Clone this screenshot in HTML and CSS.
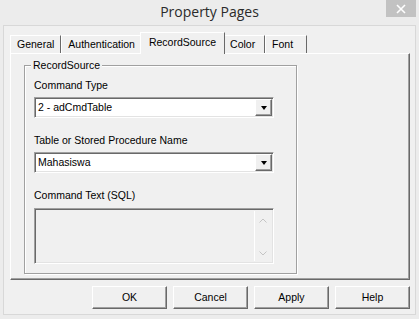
FILE: index.html
```html
<!DOCTYPE html>
<html>
<head>
<meta charset="utf-8">
<link rel="stylesheet" href="styles.css">
</head>
<body>
<div class="window">
  <div class="titlebar">
    <span class="spacer"></span>
    <div class="title">Property Pages</div>
    <div class="close">
      <svg width="10" height="10" viewBox="0 0 10 10"><path d="M1 1 L9 9 M9 1 L1 9" stroke="#fff" stroke-width="1.6" fill="none"/></svg>
    </div>
  </div>
  <div class="frame">
    <div class="tabs">
      <div class="tab">General</div>
      <div class="tab">Authentication</div>
      <div class="tab active">RecordSource</div>
      <div class="tab">Color</div>
      <div class="tab">Font</div>
    </div>
    <div class="panel">
      <div class="group">
        <div class="legend">RecordSource</div>
        <div class="label first">Command Type</div>
        <div class="combo">
          <span class="value">2 - adCmdTable</span>
          <span class="drop"><span class="arrow"></span></span>
        </div>
        <div class="label">Table or Stored Procedure Name</div>
        <div class="combo">
          <span class="value">Mahasiswa</span>
          <span class="drop"><span class="arrow"></span></span>
        </div>
        <div class="label">Command Text (SQL)</div>
        <div class="textarea">
          <div class="text"></div>
          <div class="scrollbar">
            <svg width="8" height="5" viewBox="0 0 8 5"><path d="M0.5 4.5 L4 1 L7.5 4.5" stroke="#c4c4c4" stroke-width="1" fill="none"/></svg>
            <svg width="8" height="5" viewBox="0 0 8 5"><path d="M0.5 0.5 L4 4 L7.5 0.5" stroke="#c4c4c4" stroke-width="1" fill="none"/></svg>
          </div>
        </div>
      </div>
    </div>
    <div class="buttons">
      <div class="btn">OK</div>
      <div class="btn">Cancel</div>
      <div class="btn">Apply</div>
      <div class="btn">Help</div>
    </div>
  </div>
</div>
</body>
</html>
```
FILE: styles.css
```css
html, body {
  margin: 0;
  padding: 0;
  background: #ececec;
}
.window {
  width: 419px;
  height: 319px;
  background: #ececec;
  font-family: "Liberation Sans", Arial, sans-serif;
  font-size: 10.5px;
  color: #000;
  overflow: hidden;
}
.titlebar {
  height: 25px;
  display: grid;
  grid-template-columns: 1fr auto 1fr;
}
.title {
  font-family: "Open Sans", "Noto Sans", sans-serif;
  font-size: 14px;
  line-height: 24px;
  color: #2a2a2a;
}
.close {
  justify-self: end;
  align-self: start;
  margin-right: 3px;
  width: 30px;
  height: 17px;
  background: #c2c2c2;
  display: flex;
  align-items: center;
  justify-content: center;
}
.frame {
  margin: 0 3px;
  height: 290px;
  box-sizing: border-box;
  border: 1px solid #d8d8d8;
  background: #f0f0f0;
}
.tabs {
  display: flex;
  align-items: flex-end;
  height: 21px;
  margin: 6px 0 0 6px;
}
.tab {
  height: 18px;
  box-sizing: border-box;
  min-width: 42px;
  padding: 0 6px;
  border-top: 1px solid #fff;
  border-left: 1px solid #fff;
  border-right: 1px solid #696969;
  line-height: 17px;
  white-space: nowrap;
  background: #f0f0f0;
}
.tab.active {
  height: 22px;
  margin: 0 -2px -1px -2px;
  padding: 1px 8px 0 8px;
  position: relative;
  z-index: 1;
}
.panel {
  margin-left: 6px;
  width: 400px;
  height: 227px;
  box-sizing: border-box;
  border-top: 1px solid #fff;
  border-left: 1px solid #fff;
  border-right: 1px solid #696969;
  border-bottom: 1px solid #696969;
  box-shadow: inset -1px -1px 0 #a0a0a0;
  padding-top: 11px;
  padding-left: 13px;
}
.group {
  width: 273px;
  height: 209px;
  box-sizing: border-box;
  border: 1px solid #a0a0a0;
  box-shadow: inset 1px 1px 0 #fff, 1px 1px 0 #fff;
  padding: 0 9px;
}
.legend {
  width: fit-content;
  margin: -7px 0 0 -3px;
  padding: 0 2px;
  background: #f0f0f0;
  line-height: 13px;
}
.label {
  line-height: 13px;
  margin-top: 16px;
  white-space: nowrap;
}
.label.first {
  margin-top: 7px;
}
.combo {
  margin-top: 5px;
  width: 240px;
  height: 21px;
  box-sizing: border-box;
  border-style: solid;
  border-width: 1px;
  border-color: #a0a0a0 #fff #fff #a0a0a0;
  box-shadow: inset 1px 1px 0 #696969, inset -1px -1px 0 #e3e3e3;
  background: #fff;
  display: flex;
  align-items: center;
  padding: 1px 1px 1px 3px;
}
.combo .value {
  flex: 1;
  line-height: 17px;
}
.drop {
  width: 17px;
  height: 17px;
  box-sizing: border-box;
  background: #f0f0f0;
  border-style: solid;
  border-width: 1px;
  border-color: #fff #696969 #696969 #fff;
  box-shadow: inset -1px -1px 0 #a0a0a0;
  display: flex;
  align-items: center;
  justify-content: center;
}
.arrow {
  width: 0;
  height: 0;
  border-left: 3.5px solid transparent;
  border-right: 3.5px solid transparent;
  border-top: 4px solid #000;
  margin-top: 1px;
}
.textarea {
  margin-top: 6px;
  width: 240px;
  height: 56px;
  box-sizing: border-box;
  border-style: solid;
  border-width: 1px;
  border-color: #a0a0a0 #fff #fff #a0a0a0;
  box-shadow: inset 1px 1px 0 #696969, inset -1px -1px 0 #e3e3e3;
  background: #f0f0f0;
  display: flex;
  padding: 2px 2px 2px 2px;
}
.textarea .text {
  flex: 1;
}
.scrollbar {
  width: 17px;
  box-sizing: border-box;
  border-left: 1px solid #fff;
  display: flex;
  flex-direction: column;
  justify-content: space-between;
  align-items: center;
  padding: 7px 0 5px 0;
}
.scrollbar svg {
  display: block;
}
.buttons {
  display: flex;
  justify-content: flex-end;
  gap: 6px;
  margin: 6px 5px 0 0;
}
.btn {
  width: 75px;
  height: 23px;
  box-sizing: border-box;
  background: #f0f0f0;
  border-style: solid;
  border-width: 1px;
  border-color: #fff #696969 #696969 #fff;
  box-shadow: inset -1px -1px 0 #a0a0a0;
  text-align: center;
  line-height: 20px;
}
```
